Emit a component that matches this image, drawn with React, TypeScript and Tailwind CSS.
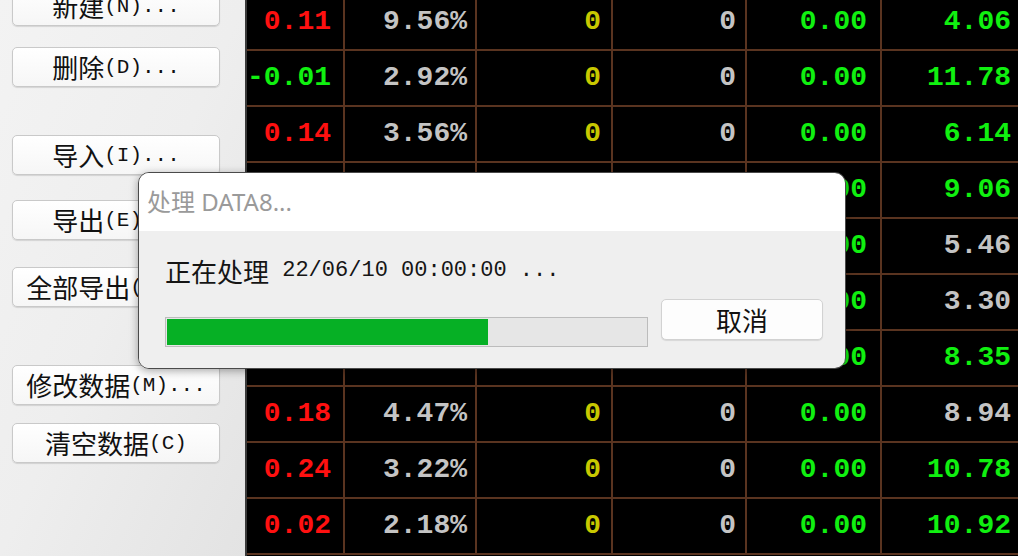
import React from "react";

// rows of the quote table; first row is partly scrolled off the top
const rows = [
  ["0.11", "r", "9.56%", "0.00", "4.06", "g"],
  ["-0.01", "g", "2.92%", "0.00", "11.78", "g"],
  ["0.14", "r", "3.56%", "0.00", "6.14", "g"],
  ["0.09", "r", "2.71%", "0.00", "9.06", "g"],
  ["0.00", "w", "1.88%", "0.00", "5.46", "w"],
  ["0.00", "w", "1.25%", "0.00", "3.30", "w"],
  ["0.12", "r", "3.04%", "0.00", "8.35", "g"],
  ["0.18", "r", "4.47%", "0.00", "8.94", "w"],
  ["0.24", "r", "3.22%", "0.00", "10.78", "g"],
  ["0.02", "r", "2.18%", "0.00", "10.92", "g"],
];

const colorOf = (c: string) =>
  c === "r" ? "text-[#ff1010]" : c === "g" ? "text-[#10f010]" : "text-[#c4c4c4]";

// splits chinese and ascii so each gets its own font size
function Label({ text, cjk = "text-[26px]", ascii = "text-[21px]" }: { text: string; cjk?: string; ascii?: string }) {
  const parts = text.split(/([\u4e00-\u9fff]+)/).filter((p) => p !== "");
  return (
    <>
      {parts.map((p, i) =>
        /[\u4e00-\u9fff]/.test(p) ? (
          <span key={i} className={`font-['Noto_Sans_CJK_SC',sans-serif] ${cjk}`}>{p}</span>
        ) : (
          <span key={i} className={`font-['Liberation_Mono',monospace] whitespace-pre ${ascii}`}>{p}</span>
        )
      )}
    </>
  );
}

function SideButton({ label, className }: { label: string; className: string }) {
  return (
    <div
      className={`w-[208px] h-[40px] shrink-0 ml-[12px] flex items-center justify-center overflow-hidden whitespace-nowrap rounded-[5px] border border-[#c9c9c9] bg-gradient-to-b from-[#ffffff] to-[#f6f6f6] shadow-[0_1px_1px_rgba(0,0,0,0.12)] text-[#111] leading-none ${className}`}
    >
      <Label text={label} />
    </div>
  );
}

export default function App() {
  return (
    <div className="relative w-[1018px] h-[556px] overflow-hidden flex bg-black">
      <div className="w-[245px] shrink-0 flex flex-col bg-gradient-to-br from-[#f3f3f3] via-[#eeeeee] to-[#e3e3e3]">
        <SideButton label="新建(N)..." className="mt-[-14px]" />
        <SideButton label="删除(D)..." className="mt-[21px]" />
        <SideButton label="导入(I)..." className="mt-[48px]" />
        <SideButton label="导出(E)..." className="mt-[25px]" />
        <SideButton label="全部导出(A)..." className="mt-[27px]" />
        <SideButton label="修改数据(M)..." className="mt-[58px]" />
        <SideButton label="清空数据(C)" className="mt-[18px]" />
      </div>

      <div className="flex-1 border-l-2 border-[#3a3a3a] overflow-hidden">
        <div className="mt-[-5px] font-['Liberation_Mono',monospace] font-bold text-[28px] leading-none">
          {rows.map((r, i) => (
            <div key={i} className="flex h-[56px] border-b-2 border-[#5a3420]">
              <div className={`w-[98px] shrink-0 border-r-2 border-[#5a3420] flex items-center justify-end pr-[12px] ${colorOf(r[1])}`}>{r[0]}</div>
              <div className="w-[132px] shrink-0 border-r-2 border-[#5a3420] flex items-center justify-end pr-[8px] text-[#c4c4c4]">{r[2]}</div>
              <div className="w-[136px] shrink-0 border-r-2 border-[#5a3420] flex items-center justify-end pr-[10px] text-[#c8c800]">0</div>
              <div className="w-[134px] shrink-0 border-r-2 border-[#5a3420] flex items-center justify-end pr-[9px] text-[#c4c4c4]">0</div>
              <div className="w-[135px] shrink-0 border-r-2 border-[#5a3420] flex items-center justify-end pr-[13px] text-[#10f010]">{r[3]}</div>
              <div className={`flex-1 flex items-center justify-end pr-[7px] ${colorOf(r[5])}`}>{r[4]}</div>
            </div>
          ))}
        </div>
      </div>

      {/* progress dialog over the window */}
      <div className="absolute left-[138px] top-[172px] w-[708px] h-[197px] rounded-[11px] border border-[#4a4a4a] overflow-hidden flex flex-col shadow-[0_2px_8px_rgba(0,0,0,0.35)]">
        <div className="h-[58px] shrink-0 bg-white flex items-center pl-[8px] text-[#9a9a9a] text-[24px] font-['Noto_Sans','Noto_Sans_CJK_SC',sans-serif]">
          处理 DATA8...
        </div>
        <div className="flex-1 bg-[#efefef] pl-[26px]">
          <div className="mt-[25px] h-[30px] flex items-center text-[#151515] leading-none">
            <Label text="正在处理 22/06/10 00:00:00 ..." cjk="text-[26px]" ascii="text-[22px]" />
          </div>
          <div className="flex items-start mt-[13px]">
            <div className="mt-[18px] w-[483px] h-[30px] border border-[#bcbcbc] bg-[#e6e6e6] p-[1px]">
              <div className="h-full w-[67%] bg-[#06b025]" />
            </div>
            <div className="ml-[13px] w-[162px] h-[41px] rounded-[5px] border border-[#d2d2d2] bg-[#fdfdfd] shadow-[0_1px_1px_rgba(0,0,0,0.1)] flex items-center justify-center text-[#111] leading-none">
              <Label text="取消" cjk="text-[26px]" />
            </div>
          </div>
        </div>
      </div>
    </div>
  );
}
